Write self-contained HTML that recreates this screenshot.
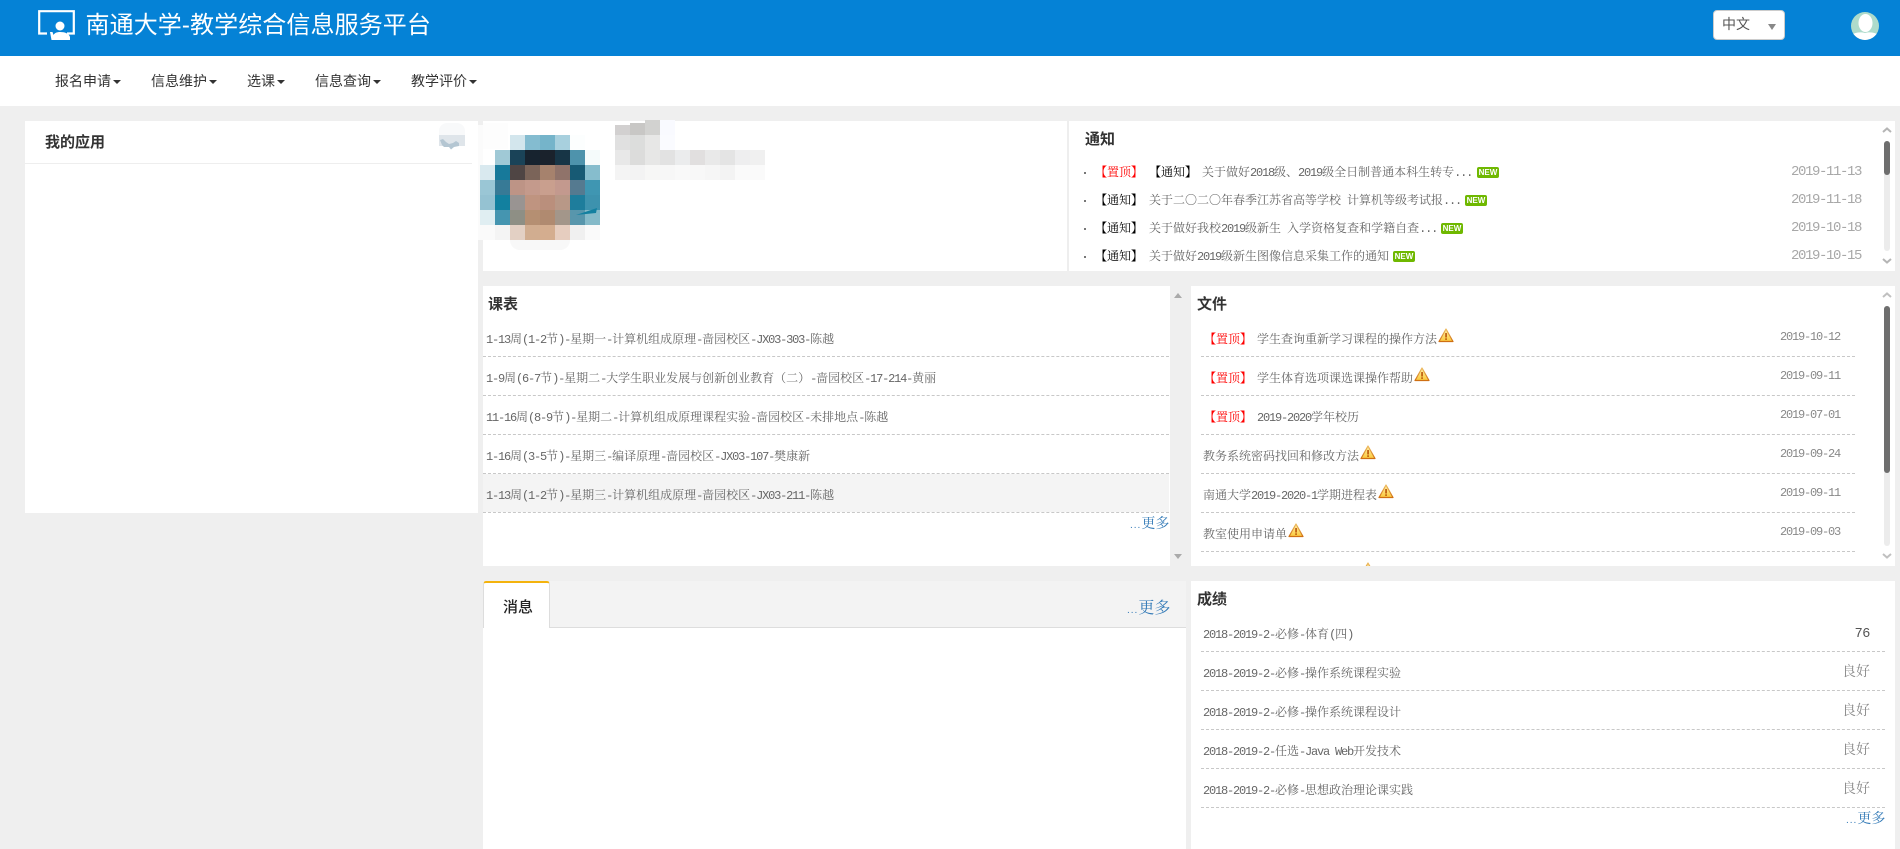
<!DOCTYPE html>
<html lang="zh-CN">
<head>
<meta charset="utf-8">
<title>南通大学-教学综合信息服务平台</title>
<style>
html,body{margin:0;padding:0;width:1900px;height:849px;overflow:hidden;background:#efefef}
body{position:relative;font-family:"Noto Serif CJK SC",serif;font-size:12px;color:#666}
.b,.t,.d,svg,.m{position:absolute}
.b{background:#fff}
.t{white-space:nowrap;line-height:20px;height:20px}
.s{font-family:"Liberation Sans","Noto Sans CJK SC",sans-serif}
.a{font-family:"Liberation Mono",monospace;letter-spacing:-1.2px}
.h{font-family:"Liberation Sans","Noto Sans CJK SC",sans-serif;font-size:15px;font-weight:700;color:#333}
.n{font-family:"Liberation Sans","Noto Sans CJK SC",sans-serif;font-size:14px;color:#333}
.n i{display:inline-block;width:0;height:0;border-top:4px solid #333;border-left:4px solid transparent;border-right:4px solid transparent;vertical-align:middle;margin-left:2px}
.d{height:0;border-top:1px dashed #c8c8c8}
.r{color:#f00}.k{color:#000}
.r b,.k b{font-weight:700}
.dt{color:#888;font-family:"Liberation Mono",monospace;letter-spacing:-1.2px}
.nd{color:#a8a8a8;font-size:14px;font-family:"Liberation Mono",monospace;letter-spacing:-1.4px}
.g{font-size:14px;color:#888;text-align:right}
.l{color:#337ab7;font-size:14px}
.new{position:absolute;width:22px;height:11px;background:#6fb800;border-radius:2px;color:#fff;font:700 8px/11px "Liberation Sans",sans-serif;text-align:center}
.m{width:15px;height:15px}
.track{position:absolute;width:6px;border-radius:3px;background:#ececec}
.thumb{position:absolute;width:6px;border-radius:3px;background:#6e6e6e}
.dot{position:absolute;width:2px;height:2px;background:#777}
</style>
</head>
<body>
<div class="b" style="left:0;top:0;width:1900px;height:56px;background:#0582d6"></div>
<svg style="left:37px;top:9px" width="40" height="33" viewBox="0 0 40 33" fill="none">
<path d="M10 24.500H2.200V2.200H36.800V24.500H30" stroke="#fff" stroke-width="2.200"/>
<circle cx="23" cy="17" r="4.500" fill="#fff"/>
<path d="M13 23L14.500 31H33V28C32 24.500 28 23 23 23C20 23 17.500 24 16.500 26L15.500 23Z" fill="#fff"/>
</svg>
<div class="t s" style="left:85.500px;top:10px;height:32px;line-height:32px;font-size:24px;color:#fff;letter-spacing:.1px">南通大学-教学综合信息服务平台</div>
<div class="b" style="left:1713px;top:10px;width:70px;height:28px;border:1px solid #ccc;border-radius:4px"></div>
<div class="t s" style="left:1722px;top:14px;font-size:14px;color:#555">中文</div>
<div style="position:absolute;left:1768px;top:24px;width:0;height:0;border-top:6px solid #888;border-left:4px solid transparent;border-right:4px solid transparent"></div>
<svg style="left:1851px;top:12px" width="28" height="28" viewBox="0 0 28 28">
<defs><clipPath id="c"><circle cx="14" cy="14" r="14"/></clipPath></defs>
<g clip-path="url(#c)"><rect width="28" height="28" fill="#aedbcb"/>
<ellipse cx="14.500" cy="11" rx="7" ry="9" fill="#fff"/>
<path d="M0 23C5 20 10 20 14 21C18 20 23 20 28 23V28H0Z" fill="#fff"/></g>
</svg>

<div class="b" style="left:0;top:56px;width:1900px;height:50px"></div>
<div class="t n" style="left:55px;top:71px">报名申请<i></i></div>
<div class="t n" style="left:151px;top:71px">信息维护<i></i></div>
<div class="t n" style="left:247px;top:71px">选课<i></i></div>
<div class="t n" style="left:315px;top:71px">信息查询<i></i></div>
<div class="t n" style="left:411px;top:71px">教学评价<i></i></div>

<!-- left panel -->
<div class="b" style="left:25px;top:121px;width:453px;height:392px"></div>
<div class="t h" style="left:45px;top:133px">我的应用</div>
<div style="position:absolute;left:25px;top:163px;width:447px;height:1px;background:#eee"></div>
<div style="position:absolute;left:439px;top:123px;width:26px;height:14px;background:#f8f9fa;border-radius:8px 8px 0 0"></div>
<div style="position:absolute;left:439px;top:135px;width:26px;height:11px;background:#dfe5ea"></div>
<svg style="left:440px;top:139px" width="20" height="12" viewBox="0 0 20 12"><path d="M0 1L3 0L6 3L9 5L13 4L16 2L19 4L19 7L14 8L11 10.500L9 8L4 8L2 6Z" fill="#b4c6d2"/></svg>

<!-- top middle -->
<div class="b" style="left:483px;top:121px;width:585px;height:150px"></div>
<div style="position:absolute;left:1067px;top:121px;width:2px;height:150px;background:#eee"></div>
<div class="b" style="left:1069px;top:121px;width:826px;height:150px"></div>
<div style="position:absolute;left:478px;top:125px;width:5px;height:115px;background:#fbfbfb"></div>
<div style="position:absolute;left:483px;top:123px;width:25px;height:26px;background:#fdfdfd"></div>
<div style="position:absolute;left:510px;top:240px;width:60px;height:10px;background:#f8f8f8;border-radius:0 0 30px 30px"></div>

<!-- avatar mosaic -->
<div class="m" style="left:510px;top:135px;background:#d3e6ed"></div><div class="m" style="left:525px;top:135px;background:#84bcd0"></div><div class="m" style="left:540px;top:135px;background:#75b4ca"></div><div class="m" style="left:555px;top:135px;background:#a8d0de"></div><div class="m" style="left:570px;top:135px;background:#fcfefe"></div>
<div class="m" style="left:495px;top:150px;background:#a0c9d6"></div><div class="m" style="left:510px;top:150px;background:#1a4358"></div><div class="m" style="left:525px;top:150px;background:#17232f"></div><div class="m" style="left:540px;top:150px;background:#1a222c"></div><div class="m" style="left:555px;top:150px;background:#173546"></div><div class="m" style="left:570px;top:150px;background:#4e93ac"></div><div class="m" style="left:585px;top:150px;background:#f5fbfb"></div>
<div class="m" style="left:480px;top:165px;background:#d9e9ef"></div><div class="m" style="left:495px;top:165px;background:#17799a"></div><div class="m" style="left:510px;top:165px;background:#4f4544"></div><div class="m" style="left:525px;top:165px;background:#7b6459"></div><div class="m" style="left:540px;top:165px;background:#a6826d"></div><div class="m" style="left:555px;top:165px;background:#90736a"></div><div class="m" style="left:570px;top:165px;background:#175a74"></div><div class="m" style="left:585px;top:165px;background:#86bdcd"></div>
<div class="m" style="left:480px;top:180px;background:#9ac6d5"></div><div class="m" style="left:495px;top:180px;background:#377a96"></div><div class="m" style="left:510px;top:180px;background:#bd9486"></div><div class="m" style="left:525px;top:180px;background:#c49a8c"></div><div class="m" style="left:540px;top:180px;background:#c99f8e"></div><div class="m" style="left:555px;top:180px;background:#c3998e"></div><div class="m" style="left:570px;top:180px;background:#557a90"></div><div class="m" style="left:585px;top:180px;background:#3f96b2"></div>
<div class="m" style="left:480px;top:195px;background:#95c2d2"></div><div class="m" style="left:495px;top:195px;background:#12809f"></div><div class="m" style="left:510px;top:195px;background:#999492"></div><div class="m" style="left:525px;top:195px;background:#bf9480"></div><div class="m" style="left:540px;top:195px;background:#ba8f7c"></div><div class="m" style="left:555px;top:195px;background:#b89887"></div><div class="m" style="left:570px;top:195px;background:#1e7d9c"></div><div class="m" style="left:585px;top:195px;background:#3d92ae"></div>
<div class="m" style="left:480px;top:210px;background:#e0eef2"></div><div class="m" style="left:495px;top:210px;background:#4595b0"></div><div class="m" style="left:510px;top:210px;background:#8e8f85"></div><div class="m" style="left:525px;top:210px;background:#b58f72"></div><div class="m" style="left:540px;top:210px;background:#b08a70"></div><div class="m" style="left:555px;top:210px;background:#a3968a"></div><div class="m" style="left:570px;top:210px;background:#5896ac"></div><div class="m" style="left:585px;top:210px;background:#85bac9"></div>
<div class="m" style="left:480px;top:225px;background:#fafafa"></div><div class="m" style="left:495px;top:225px;background:#f4f4f4"></div><div class="m" style="left:510px;top:225px;background:#e3d0c4"></div><div class="m" style="left:525px;top:225px;background:#d1ad90"></div><div class="m" style="left:540px;top:225px;background:#d4ad8f"></div><div class="m" style="left:555px;top:225px;background:#e6cdbf"></div><div class="m" style="left:570px;top:225px;background:#f0f0f0"></div><div class="m" style="left:585px;top:225px;background:#fafafa"></div>
<svg style="left:575px;top:206px" width="24" height="10"><path d="M1 9L22 2L21 7Z" fill="#1380a0"/></svg>

<!-- blurred name -->
<div class="m" style="left:615px;top:125px;height:10px;background:#d2d0d0"></div><div class="m" style="left:630px;top:123px;height:12px;background:#c8c7c5"></div><div class="m" style="left:645px;top:120px;height:15px;background:#d2d2d0"></div><div class="m" style="left:660px;top:120px;height:15px;background:#f9faff"></div>
<div class="m" style="left:615px;top:135px;background:#e0e0e0"></div><div class="m" style="left:630px;top:135px;background:#dcdddc"></div><div class="m" style="left:645px;top:135px;background:#e7e7e6"></div><div class="m" style="left:660px;top:135px;background:#fafbff"></div>
<div class="m" style="left:615px;top:150px;background:#e8e8e8"></div><div class="m" style="left:630px;top:150px;background:#dcdcdb"></div><div class="m" style="left:645px;top:150px;background:#e7e7e6"></div><div class="m" style="left:660px;top:150px;background:#e2e2e2"></div><div class="m" style="left:675px;top:150px;background:#ebeced"></div><div class="m" style="left:690px;top:150px;background:#e1dfdf"></div><div class="m" style="left:705px;top:150px;background:#e9e9e9"></div><div class="m" style="left:720px;top:150px;background:#e4e4e4"></div><div class="m" style="left:735px;top:150px;background:#eeeeef"></div><div class="m" style="left:750px;top:150px;background:#f0f0f0"></div>
<div class="m" style="left:615px;top:165px;background:#f4f4f4"></div><div class="m" style="left:630px;top:165px;background:#f3f3f3"></div><div class="m" style="left:645px;top:165px;background:#f7f7f6"></div><div class="m" style="left:660px;top:165px;background:#f7f7f7"></div><div class="m" style="left:675px;top:165px;background:#f9f9f9"></div><div class="m" style="left:690px;top:165px;background:#f8f8f8"></div><div class="m" style="left:705px;top:165px;background:#f6f6f6"></div><div class="m" style="left:720px;top:165px;background:#f3f3f3"></div><div class="m" style="left:735px;top:165px;background:#fafafa"></div><div class="m" style="left:750px;top:165px;background:#fafafa"></div>

<!-- notices -->
<div class="t h" style="left:1085px;top:130px">通知</div>
<div class="dot" style="left:1084px;top:172px"></div>
<div class="dot" style="left:1084px;top:200px"></div>
<div class="dot" style="left:1084px;top:228px"></div>
<div class="dot" style="left:1084px;top:256px"></div>
<div class="t r" style="left:1095px;top:162px"><b>【</b>置顶<b>】</b></div>
<div class="t k" style="left:1149px;top:162px"><b>【</b>通知<b>】</b></div>
<div class="t" style="left:1202px;top:162px">关于做好<span class="a">2018</span>级、<span class="a">2019</span>级全日制普通本科生转专<span class="a">...</span></div>
<div class="new" style="left:1477px;top:167px">NEW</div>
<div class="t nd" style="left:1791px;top:162px">2019-11-13</div>
<div class="t k" style="left:1095px;top:190px"><b>【</b>通知<b>】</b></div>
<div class="t" style="left:1149px;top:190px">关于二〇二〇年春季江苏省高等学校<span class="a"> </span>计算机等级考试报<span class="a">...</span></div>
<div class="new" style="left:1465px;top:195px">NEW</div>
<div class="t nd" style="left:1791px;top:190px">2019-11-18</div>
<div class="t k" style="left:1095px;top:218px"><b>【</b>通知<b>】</b></div>
<div class="t" style="left:1149px;top:218px">关于做好我校<span class="a">2019</span>级新生<span class="a"> </span>入学资格复查和学籍自查<span class="a">...</span></div>
<div class="new" style="left:1441px;top:223px">NEW</div>
<div class="t nd" style="left:1791px;top:218px">2019-10-18</div>
<div class="t k" style="left:1095px;top:246px"><b>【</b>通知<b>】</b></div>
<div class="t" style="left:1149px;top:246px">关于做好<span class="a">2019</span>级新生图像信息采集工作的通知</div>
<div class="new" style="left:1393px;top:251px">NEW</div>
<div class="t nd" style="left:1791px;top:246px">2019-10-15</div>
<div class="track" style="left:1884px;top:141px;height:110px"></div>
<div class="thumb" style="left:1884px;top:141px;height:34px"></div>
<svg style="left:1882px;top:127px" width="10" height="6"><path d="M1 5L5 1.500L9 5" fill="none" stroke="#b5b5b5" stroke-width="2"/></svg>
<svg style="left:1882px;top:258px" width="10" height="6"><path d="M1 1L5 4.500L9 1" fill="none" stroke="#b5b5b5" stroke-width="2"/></svg>

<!-- schedule -->
<div class="b" style="left:483px;top:286px;width:687px;height:280px"></div>
<div class="t h" style="left:488px;top:295px">课表</div>
<div class="t" style="left:486px;top:329px"><span class="a">1-13</span>周<span class="a">(1-2</span>节<span class="a">)-</span>星期一<span class="a">-</span>计算机组成原理<span class="a">-</span>啬园校区<span class="a">-JX03-303-</span>陈越</div>
<div class="d" style="left:483px;top:356px;width:686px"></div>
<div class="t" style="left:486px;top:368px"><span class="a">1-9</span>周<span class="a">(6-7</span>节<span class="a">)-</span>星期二<span class="a">-</span>大学生职业发展与创新创业教育（二）<span class="a">-</span>啬园校区<span class="a">-17-214-</span>黄丽</div>
<div class="d" style="left:483px;top:395px;width:686px"></div>
<div class="t" style="left:486px;top:407px"><span class="a">11-16</span>周<span class="a">(8-9</span>节<span class="a">)-</span>星期二<span class="a">-</span>计算机组成原理课程实验<span class="a">-</span>啬园校区<span class="a">-</span>未排地点<span class="a">-</span>陈越</div>
<div class="d" style="left:483px;top:434px;width:686px"></div>
<div class="t" style="left:486px;top:446px"><span class="a">1-16</span>周<span class="a">(3-5</span>节<span class="a">)-</span>星期三<span class="a">-</span>编译原理<span class="a">-</span>啬园校区<span class="a">-JX03-107-</span>樊康新</div>
<div class="d" style="left:483px;top:473px;width:686px"></div>
<div style="position:absolute;left:483px;top:474px;width:686px;height:38px;background:#f4f4f4"></div>
<div class="t" style="left:486px;top:485px"><span class="a">1-13</span>周<span class="a">(1-2</span>节<span class="a">)-</span>星期三<span class="a">-</span>计算机组成原理<span class="a">-</span>啬园校区<span class="a">-JX03-211-</span>陈越</div>
<div class="d" style="left:483px;top:512px;width:686px"></div>
<div class="t l" style="left:1130px;top:513px"><span class="s" style="font-size:10px;letter-spacing:1px">...</span>更多</div>
<svg style="left:1174px;top:293px" width="8" height="5"><path d="M0 5L4 0L8 5Z" fill="#aaa"/></svg>
<svg style="left:1174px;top:554px" width="8" height="5"><path d="M0 0L4 5L8 0Z" fill="#aaa"/></svg>

<!-- files -->
<svg width="0" height="0" style="left:0;top:0"><defs>
<linearGradient id="gw" x1="0" y1="0" x2="0" y2="1"><stop offset="0" stop-color="#fff0a8"/><stop offset="1" stop-color="#fac83a"/></linearGradient>
<linearGradient id="gs" x1="0" y1="0" x2="0" y2="1"><stop offset="0" stop-color="#eebb60"/><stop offset="1" stop-color="#cf6e12"/></linearGradient>
<g id="w"><path d="M8 1L15 13.500H1Z" fill="url(#gw)" stroke="url(#gs)" stroke-width="1.200" stroke-linejoin="round"/><rect x="7.300" y="5" width="1.500" height="4.500" fill="#b34a00"/><rect x="7.300" y="10.300" width="1.500" height="1.600" fill="#b34a00"/></g>
</defs></svg>
<div class="b" style="left:1191px;top:286px;width:704px;height:280px;overflow:hidden">
<svg style="left:169px;top:276px" width="16" height="15" viewBox="0 0 16 15"><use href="#w"/></svg>
</div>
<div class="t h" style="left:1197px;top:295px">文件</div>
<div class="t r" style="left:1204px;top:329px"><b>【</b>置顶<b>】</b></div>
<div class="t" style="left:1257px;top:329px">学生查询重新学习课程的操作方法</div>
<svg style="left:1438px;top:328px" width="16" height="15" viewBox="0 0 16 15"><use href="#w"/></svg>
<div class="t dt" style="left:1780px;top:327px">2019-10-12</div>
<div class="d" style="left:1201px;top:356px;width:654px"></div>
<div class="t r" style="left:1204px;top:368px"><b>【</b>置顶<b>】</b></div>
<div class="t" style="left:1257px;top:368px">学生体育选项课选课操作帮助</div>
<svg style="left:1414px;top:367px" width="16" height="15" viewBox="0 0 16 15"><use href="#w"/></svg>
<div class="t dt" style="left:1780px;top:366px">2019-09-11</div>
<div class="d" style="left:1201px;top:395px;width:654px"></div>
<div class="t r" style="left:1204px;top:407px"><b>【</b>置顶<b>】</b></div>
<div class="t" style="left:1257px;top:407px"><span class="a">2019-2020</span>学年校历</div>
<div class="t dt" style="left:1780px;top:405px">2019-07-01</div>
<div class="d" style="left:1201px;top:434px;width:654px"></div>
<div class="t" style="left:1203px;top:446px">教务系统密码找回和修改方法</div>
<svg style="left:1360px;top:445px" width="16" height="15" viewBox="0 0 16 15"><use href="#w"/></svg>
<div class="t dt" style="left:1780px;top:444px">2019-09-24</div>
<div class="d" style="left:1201px;top:473px;width:654px"></div>
<div class="t" style="left:1203px;top:485px">南通大学<span class="a">2019-2020-1</span>学期进程表</div>
<svg style="left:1378px;top:484px" width="16" height="15" viewBox="0 0 16 15"><use href="#w"/></svg>
<div class="t dt" style="left:1780px;top:483px">2019-09-11</div>
<div class="d" style="left:1201px;top:512px;width:654px"></div>
<div class="t" style="left:1203px;top:524px">教室使用申请单</div>
<svg style="left:1288px;top:523px" width="16" height="15" viewBox="0 0 16 15"><use href="#w"/></svg>
<div class="t dt" style="left:1780px;top:522px">2019-09-03</div>
<div class="d" style="left:1201px;top:551px;width:654px"></div>
<div class="track" style="left:1884px;top:306px;height:240px"></div>
<div class="thumb" style="left:1884px;top:306px;height:167px"></div>
<svg style="left:1882px;top:292px" width="10" height="6"><path d="M1 5L5 1.500L9 5" fill="none" stroke="#c0c0c0" stroke-width="2"/></svg>
<svg style="left:1882px;top:553px" width="10" height="6"><path d="M1 1L5 4.500L9 1" fill="none" stroke="#c0c0c0" stroke-width="2"/></svg>

<!-- messages -->
<div class="b" style="left:483px;top:581px;width:703px;height:268px"></div>
<div style="position:absolute;left:483px;top:581px;width:703px;height:46px;background:#f3f3f3;border-bottom:1px solid #ddd"></div>
<div style="position:absolute;left:483px;top:581px;width:67px;height:47px;background:#fff;border-left:1px solid #ddd;border-right:1px solid #ddd;border-radius:3px 3px 0 0;border-top:2px solid #f4b30d;box-sizing:border-box"></div>
<div class="t h" style="left:503px;top:598px;font-weight:500;color:#222">消息</div>
<div class="t l" style="left:1127px;top:597px;font-size:16px"><span class="s" style="font-size:10px;letter-spacing:1px">...</span>更多</div>

<!-- grades -->
<div class="b" style="left:1191px;top:581px;width:704px;height:268px"></div>
<div class="t h" style="left:1197px;top:590px">成绩</div>
<div class="t" style="left:1203px;top:624px"><span class="a">2018-2019-2-</span>必修<span class="a">-</span>体育<span class="a">(</span>四<span class="a">)</span></div>
<div class="t g" style="left:1820px;top:622px;width:50px;color:#555"><span class="a" style="letter-spacing:-.4px;font-size:13.500px">76</span></div>
<div class="d" style="left:1201px;top:651px;width:684px"></div>
<div class="t" style="left:1203px;top:663px"><span class="a">2018-2019-2-</span>必修<span class="a">-</span>操作系统课程实验</div>
<div class="t g" style="left:1820px;top:661px;width:50px">良好</div>
<div class="d" style="left:1201px;top:690px;width:684px"></div>
<div class="t" style="left:1203px;top:702px"><span class="a">2018-2019-2-</span>必修<span class="a">-</span>操作系统课程设计</div>
<div class="t g" style="left:1820px;top:700px;width:50px">良好</div>
<div class="d" style="left:1201px;top:729px;width:684px"></div>
<div class="t" style="left:1203px;top:741px"><span class="a">2018-2019-2-</span>任选<span class="a">-Java Web</span>开发技术</div>
<div class="t g" style="left:1820px;top:739px;width:50px">良好</div>
<div class="d" style="left:1201px;top:768px;width:684px"></div>
<div class="t" style="left:1203px;top:780px"><span class="a">2018-2019-2-</span>必修<span class="a">-</span>思想政治理论课实践</div>
<div class="t g" style="left:1820px;top:778px;width:50px">良好</div>
<div class="d" style="left:1201px;top:807px;width:684px"></div>
<div class="t l" style="left:1846px;top:808px"><span class="s" style="font-size:10px;letter-spacing:1px">...</span>更多</div>
</body>
</html>
